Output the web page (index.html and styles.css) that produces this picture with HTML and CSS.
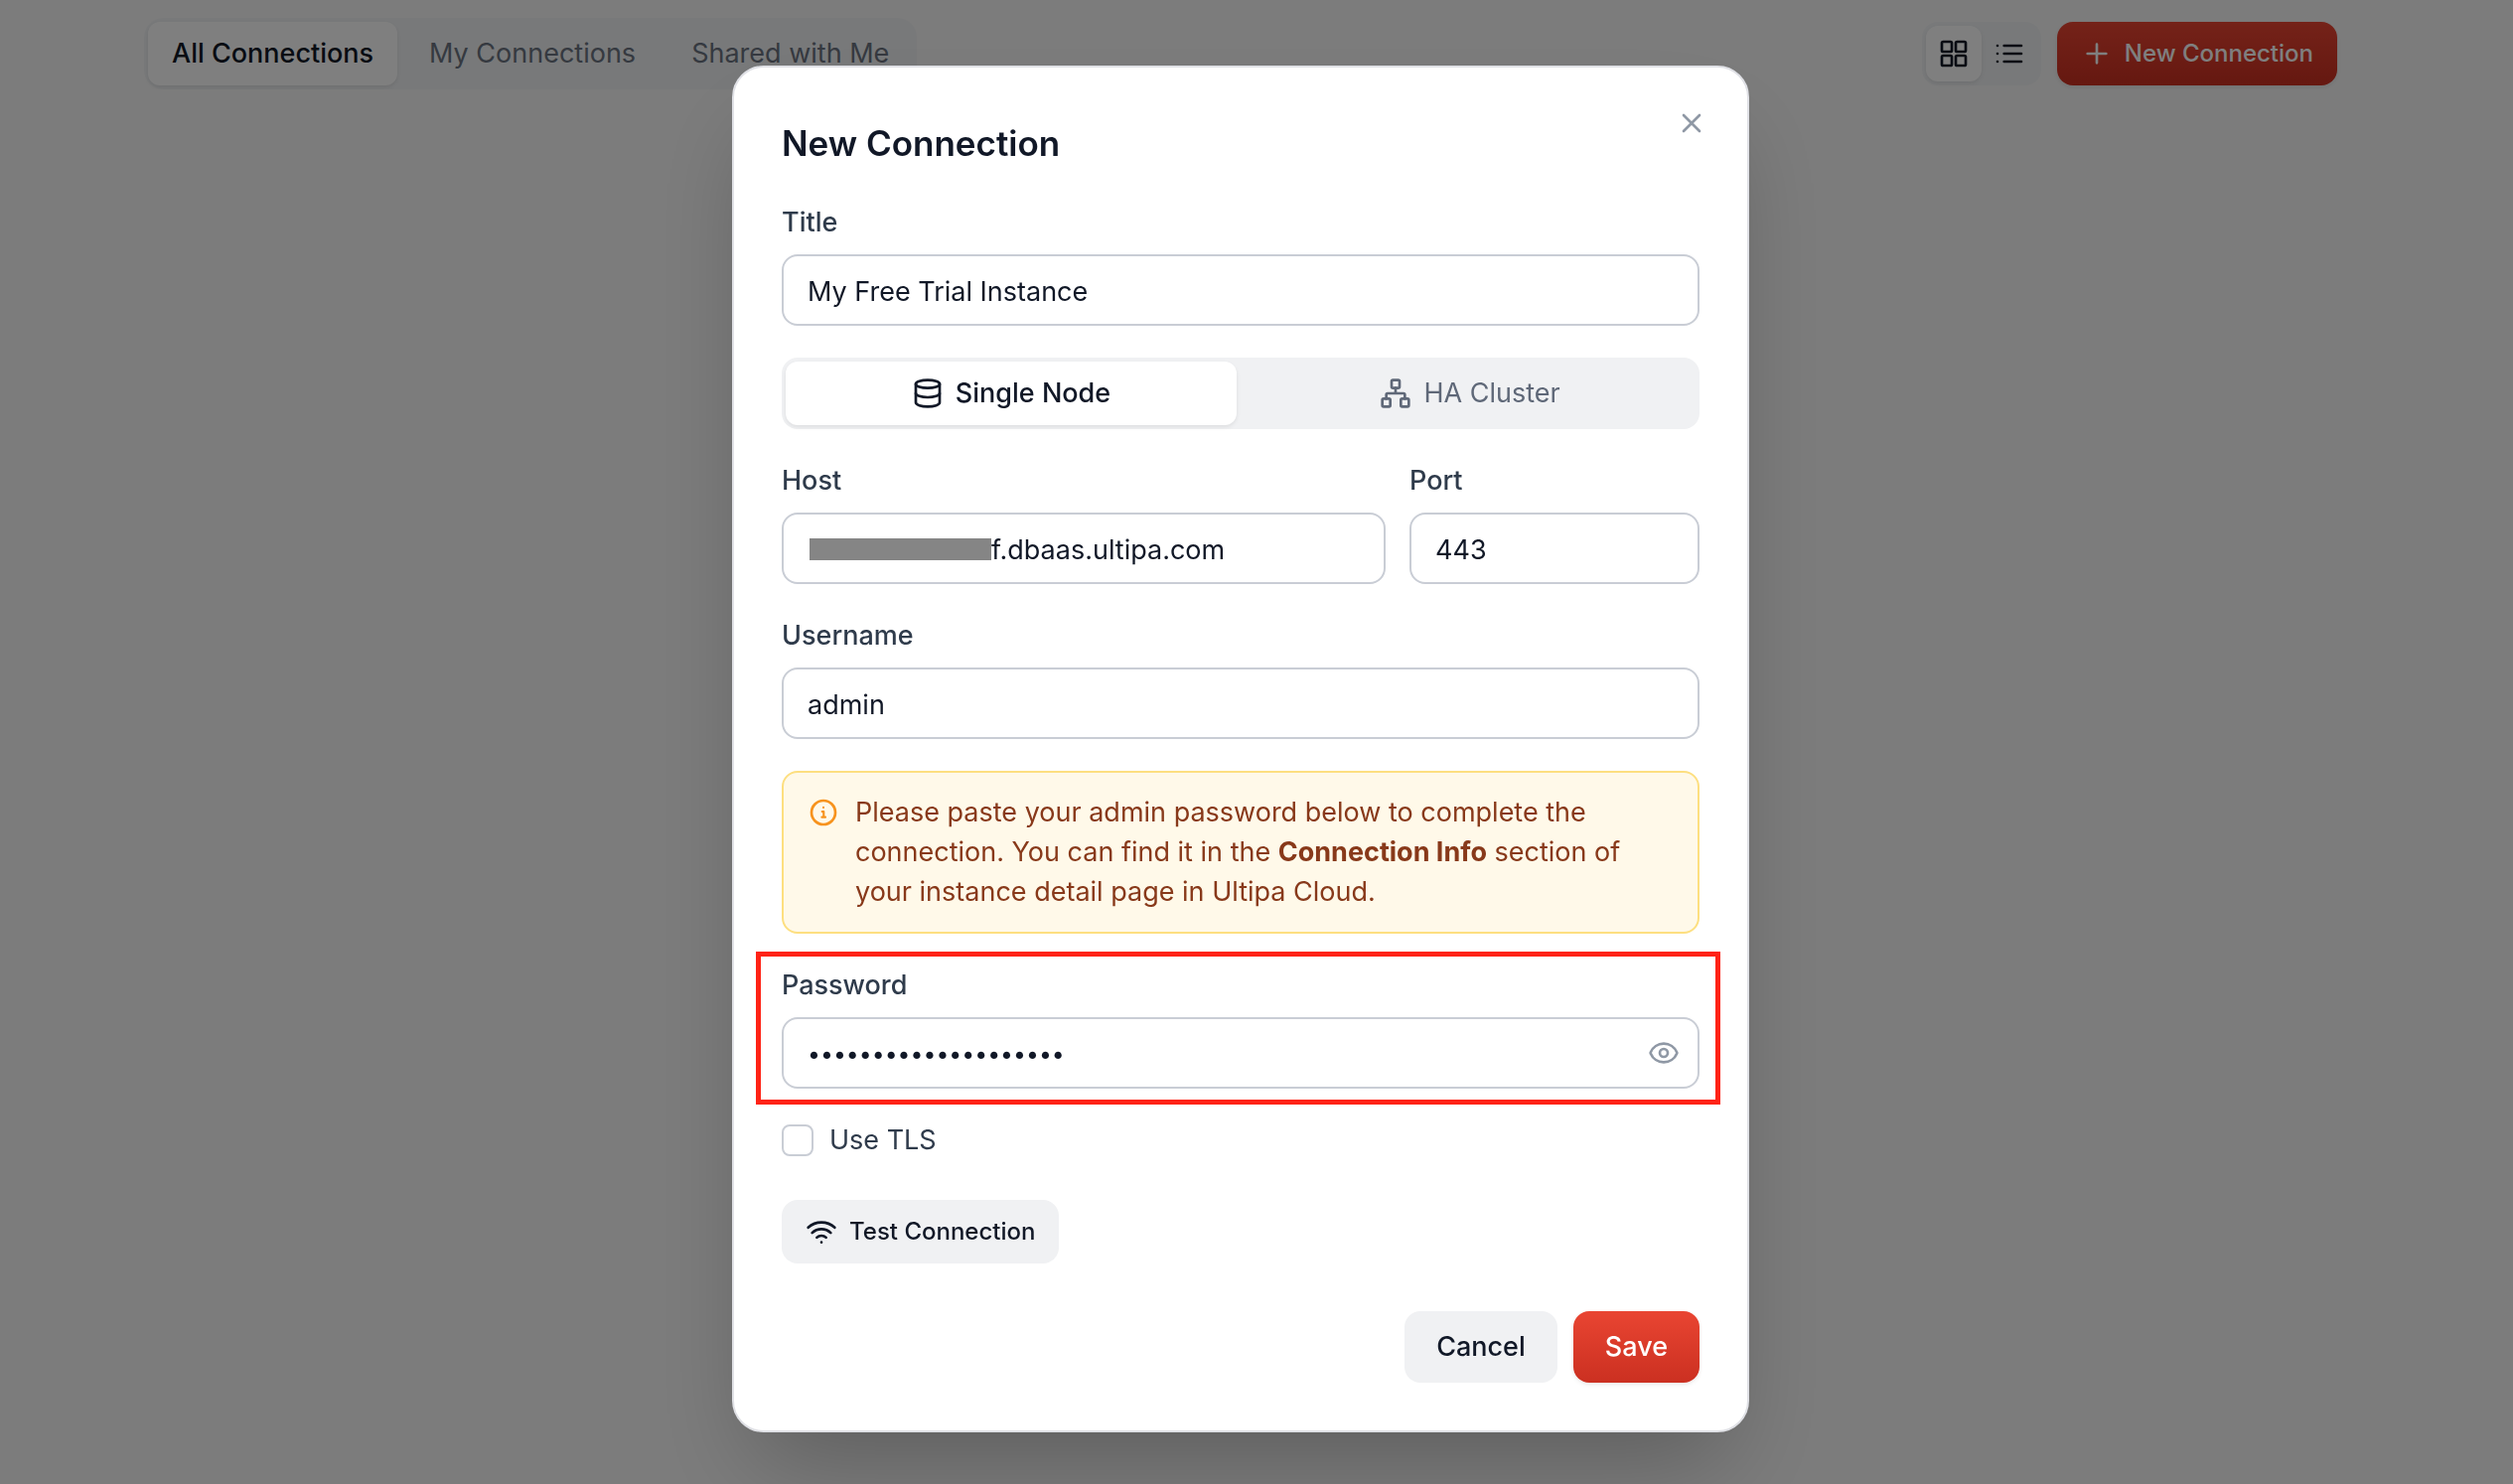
FILE: index.html
```
<!DOCTYPE html>
<html lang="en">
<head>
  <meta charset="utf-8">
  <title>Connections</title>
  <link rel="stylesheet" href="styles.css">
</head>
<body>
  <main class="page">
    <header class="toolbar">
      <nav class="tabs">
        <button type="button" class="tab active">All Connections</button>
        <button type="button" class="tab">My Connections</button>
        <button type="button" class="tab">Shared with Me</button>
      </nav>
      <div class="actions">
        <div class="view-toggle">
          <button type="button" class="view active" aria-label="Grid view">
            <svg class="icon" viewBox="0 0 24 24"><rect x="3" y="3" width="7.5" height="7.5" rx="1"/><rect x="13.5" y="3" width="7.5" height="7.5" rx="1"/><rect x="13.5" y="13.5" width="7.5" height="7.5" rx="1"/><rect x="3" y="13.5" width="7.5" height="7.5" rx="1"/></svg>
          </button>
          <button type="button" class="view" aria-label="List view">
            <svg class="icon" viewBox="0 0 24 24"><path d="M3 6h.01M3 12h.01M3 18h.01M8 6h13M8 12h13M8 18h13"/></svg>
          </button>
        </div>
        <button type="button" class="btn btn-small btn-primary">
          <svg class="icon" viewBox="0 0 24 24"><path d="M5 12h14M12 5v14"/></svg>
          New Connection
        </button>
      </div>
    </header>
  </main>

  <div class="overlay">
    <form class="modal" role="dialog" aria-labelledby="modal-title">
      <button type="button" class="close" aria-label="Close">
        <svg class="icon" viewBox="0 0 24 24"><path d="M18 6 6 18M6 6l12 12"/></svg>
      </button>
      <h2 class="modal-title" id="modal-title">New Connection</h2>

      <div class="fields">
        <div class="field">
          <label for="title">Title</label>
          <input class="input" type="text" id="title" value="My Free Trial Instance">
        </div>

        <div class="segmented">
          <button type="button" class="segment active">
            <svg class="icon" viewBox="0 0 24 24"><ellipse cx="12" cy="5" rx="9" ry="3"/><path d="M3 5v14a9 3 0 0 0 18 0V5"/><path d="M3 12a9 3 0 0 0 18 0"/></svg>
            Single Node
          </button>
          <button type="button" class="segment">
            <svg class="icon" viewBox="0 0 24 24"><rect x="16" y="16" width="6" height="6" rx="1"/><rect x="2" y="16" width="6" height="6" rx="1"/><rect x="9" y="2" width="6" height="6" rx="1"/><path d="M5 16v-3a1 1 0 0 1 1-1h12a1 1 0 0 1 1 1v3M12 12V8"/></svg>
            HA Cluster
          </button>
        </div>

        <div class="field-row">
          <div class="field field-host">
            <label for="host">Host</label>
            <input class="input input-masked" type="text" id="host" value="f.dbaas.ultipa.com">
            <span class="mask"></span>
          </div>
          <div class="field">
            <label for="port">Port</label>
            <input class="input" type="text" id="port" value="443">
          </div>
        </div>

        <div class="field">
          <label for="username">Username</label>
          <input class="input" type="text" id="username" value="admin">
        </div>

        <div class="notice">
          <svg class="icon notice-icon" viewBox="0 0 24 24"><circle cx="12" cy="12" r="9"/><path class="glyph" d="M11 11.300h1.200v4M10.800 15.500h2.700M12 8.200h.01"/></svg>
          <p>Please paste your admin password below to complete the connection. You can find it in the <strong>Connection Info</strong> section of your instance detail page in Ultipa Cloud.</p>
        </div>

        <div class="field field-password">
          <label for="password">Password</label>
          <input class="input input-password" type="password" id="password" value="aaaaaaaaaaaaaaaaaaaa">
          <button type="button" class="reveal" aria-label="Show password">
            <svg class="icon" viewBox="0 0 24 24"><path d="M2.062 12.348a1 1 0 0 1 0-.696 10.750 10.750 0 0 1 19.876 0 1 1 0 0 1 0 .696 10.750 10.750 0 0 1-19.876 0"/><circle cx="12" cy="12" r="3"/></svg>
          </button>
        </div>

        <div class="check">
          <input type="checkbox" id="tls">
          <label for="tls">Use TLS</label>
        </div>
      </div>

      <button type="button" class="btn btn-small btn-test">
        <svg class="icon" viewBox="0 0 24 24"><path d="M12 20h.01M2 8.820a15 15 0 0 1 20 0M5 12.859a10 10 0 0 1 14 0M8.500 16.429a5 5 0 0 1 7 0"/></svg>
        Test Connection
      </button>

      <div class="modal-footer">
        <button type="button" class="btn">Cancel</button>
        <button type="submit" class="btn btn-primary">Save</button>
      </div>
    </form>
  </div>
</body>
</html>
```
FILE: styles.css
```
* {
  box-sizing: border-box;
}

body {
  margin: 0;
  background-color: #f8f8f8;
  font-family: Inter, "Liberation Sans", sans-serif;
  font-size: 27px;
  line-height: 40px;
  color: #111827;
}

button,
input {
  font: inherit;
  color: inherit;
}

button {
  border: none;
  padding: 0;
  background: none;
  cursor: pointer;
}

.icon {
  flex: none;
  width: 32px;
  height: 32px;
  fill: none;
  stroke: currentColor;
  stroke-width: 2;
  stroke-linecap: round;
  stroke-linejoin: round;
}

/* toolbar */
.page {
  padding: 18px 177px 0 145px;
}

.toolbar {
  display: flex;
  align-items: center;
  justify-content: space-between;
}

.tabs {
  display: flex;
  gap: 8px;
  padding: 4px;
  border-radius: 20px;
  background-color: #f0f2f4;
}

.tab {
  height: 64px;
  padding: 0 24px;
  border-radius: 12px;
  color: #6b7280;
}

.tab.active,
.view.active,
.segment.active {
  background-color: #fff;
  font-weight: 500;
  color: #111827;
  box-shadow: 0 2px 4px rgba(0, 0, 0, 0.08);
}

.actions {
  display: flex;
  gap: 16px;
}

.view-toggle {
  display: flex;
  padding: 4px;
  border-radius: 16px;
  background-color: #f0f2f4;
}

.view {
  display: flex;
  align-items: center;
  justify-content: center;
  width: 56px;
  height: 56px;
  border-radius: 12px;
}

/* buttons */
.btn {
  display: flex;
  align-items: center;
  justify-content: center;
  gap: 12px;
  height: 72px;
  padding: 0 32px;
  border-radius: 16px;
  background-color: #f0f1f3;
  font-weight: 500;
}

.btn-small {
  height: 64px;
  padding: 0 24px;
  font-size: 24px;
}

.btn-primary {
  background: linear-gradient(#e94532, #cb3021);
  color: #fff;
  box-shadow: 0 2px 4px rgba(0, 0, 0, 0.08);
}

/* modal */
.overlay {
  position: fixed;
  inset: 0;
  display: flex;
  align-items: flex-start;
  justify-content: center;
  padding: 66px 32px 0 0;
  background-color: rgba(0, 0, 0, 0.5);
}

.modal {
  position: relative;
  width: 100%;
  max-width: 1024px;
  padding: 48px;
  border: 2px solid #e0e1e6;
  border-radius: 32px;
  background-color: #fff;
  box-shadow: 0 50px 100px -24px rgba(0, 0, 0, 0.25);
}

.close {
  position: absolute;
  top: 40px;
  right: 40px;
  display: flex;
  color: #8f98a5;
}

.modal-title {
  margin: 0 0 32px;
  font-size: 35px;
  font-weight: 600;
  line-height: 56px;
}

.fields {
  display: flex;
  flex-direction: column;
  gap: 32px;
}

.field {
  position: relative;
  display: flex;
  flex-direction: column;
  gap: 12px;
}

.field label {
  font-weight: 500;
  color: #2f3b4b;
}

.input {
  width: 100%;
  height: 72px;
  padding: 2px 24px 0;
  border: 2px solid #c9cdd5;
  border-radius: 16px;
  background-color: #fff;
}

.input-password {
  font-size: 23px;
}

.field-row {
  display: grid;
  grid-template-columns: repeat(3, 1fr);
  gap: 24px;
}

.field-host {
  grid-column: span 2;
}

.input-masked {
  padding-left: 209px;
}

/* grey block over the private part of the host name */
.mask {
  position: absolute;
  left: 28px;
  bottom: 24px;
  width: 183px;
  height: 22px;
  background-color: #858585;
}

.segmented {
  display: grid;
  grid-template-columns: 1fr 1fr;
  gap: 8px;
  padding: 4px;
  border-radius: 16px;
  background-color: #f0f1f3;
}

.segment {
  display: flex;
  align-items: center;
  justify-content: center;
  gap: 12px;
  height: 64px;
  border-radius: 12px;
  color: #5f6878;
}

.notice {
  display: flex;
  gap: 16px;
  padding: 20px 24px;
  border: 2px solid #fddf80;
  border-radius: 16px;
  background-color: #fff9e9;
  color: #88391a;
}

.notice p {
  margin: 0;
}

.notice-icon {
  margin-top: 4px;
  color: #f7931e;
}

.notice-icon .glyph {
  stroke-width: 1.6;
}

/* red frame drawn around the password field */
.field-password::after {
  content: "";
  position: absolute;
  inset: -14px -21px -16px -26px;
  border: 5px solid #ff2316;
  pointer-events: none;
}

.reveal {
  position: absolute;
  right: 20px;
  bottom: 20px;
  z-index: 1;
  display: flex;
  color: #8f98a5;
}

.check {
  display: flex;
  align-items: center;
  gap: 16px;
  color: #2f3b4b;
}

.check input {
  appearance: none;
  width: 32px;
  height: 32px;
  margin: 0;
  border: 2px solid #c9cdd5;
  border-radius: 8px;
}

.btn-test {
  margin-top: 40px;
}

.modal-footer {
  display: flex;
  justify-content: flex-end;
  gap: 16px;
  margin-top: 48px;
}
```
